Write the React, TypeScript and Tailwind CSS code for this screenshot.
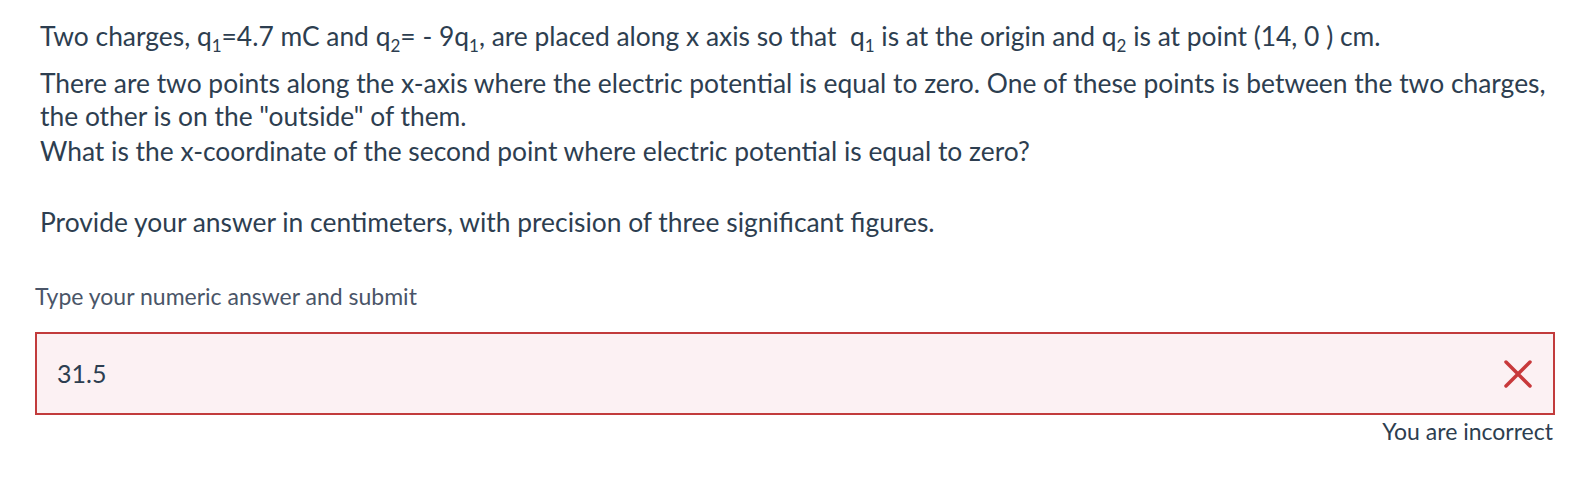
import type { ReactNode } from "react";

function Sub({ children }: { children: ReactNode }) {
  return <span className="relative top-[6px] text-[17px] leading-none">{children}</span>;
}

export default function App() {
  return (
    <div className="w-[1571px] h-[491px] bg-white pl-[35px] pr-[16px] font-['Lato',sans-serif] text-[#2d3e50]">
      <div className="pl-[5px] pt-[20px] text-[26.4px] leading-[33px] whitespace-nowrap">
        <p>
          Two charges, q<Sub>1</Sub>=4.7 mC and q<Sub>2</Sub>= - 9q<Sub>1</Sub>, are placed along x axis so that&nbsp; q
          <Sub>1</Sub> is at the origin and q<Sub>2</Sub> is at point (14, 0 ) cm.
        </p>
        <p className="mt-[14px]">
          There are two points along the x-axis where the electric potential is equal to zero. One of these points is
          between the two charges,
          <br />
          the other is on the "outside" of them.
        </p>
        <p className="mt-[2px]">What is the x-coordinate of the second point where electric potential is equal to zero?</p>
        <p className="mt-[38px]">Provide your answer in centimeters, with precision of three significant figures.</p>
      </div>

      <div className="mt-[43px] text-[23px] leading-[28px] text-[#4a5568]">Type your numeric answer and submit</div>

      <div className="mt-[22px] h-[83px] border-2 border-[#c23b3c] bg-[#fcf1f3] flex items-center justify-between pl-[20px] pr-[20px]">
        <span className="text-[25px] text-[#2d3e50]">31.5</span>
        <svg width="28" height="28" viewBox="0 0 28 28" className="mr-[1px]">
          <path d="M2 2 L26 26 M26 2 L2 26" stroke="#c8393b" strokeWidth="3.5" strokeLinecap="round" />
        </svg>
      </div>

      <div className="mt-[2px] text-right text-[23px] leading-[28px] pr-[2px]">You are incorrect</div>
    </div>
  );
}
